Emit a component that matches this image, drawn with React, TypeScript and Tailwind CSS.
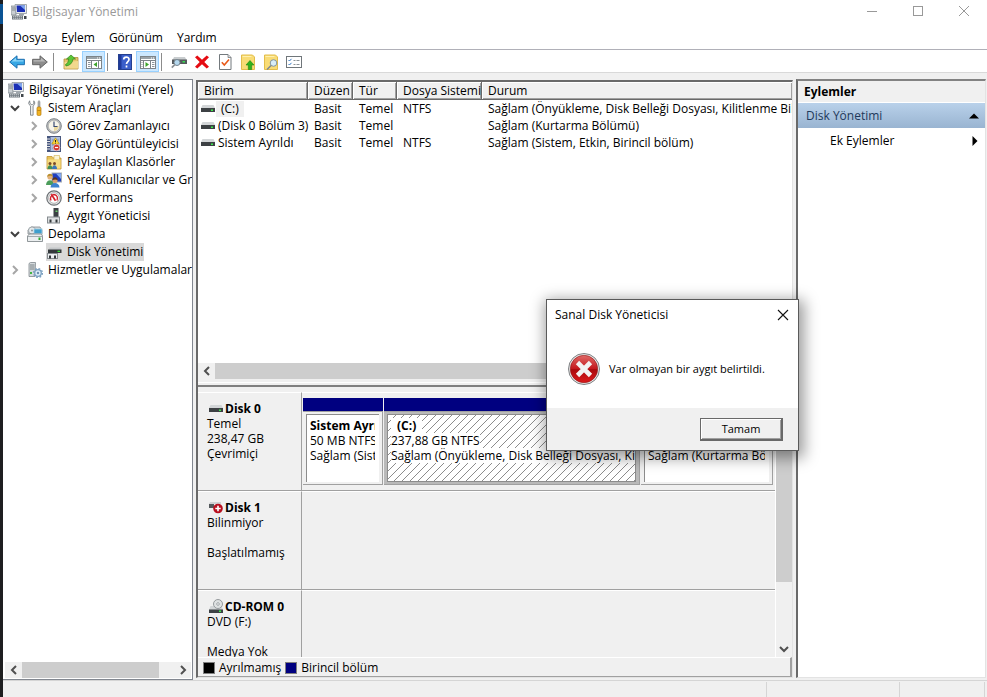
import React from 'react';

type Children = { children?: React.ReactNode };

function Svg({ children, w = 16, h = 16 }: Children & { w?: number; h?: number }) {
  return (
    <svg width={w} height={h} viewBox={`0 0 ${w} ${h}`} className="block shrink-0" aria-hidden="true">
      {children}
    </svg>
  );
}

const ComputerIcon = () => (
  <Svg>
    <rect x="0" y="2" width="5" height="9" fill="#c9ced2" stroke="#7d858b" strokeWidth=".7" />
    <path d="M1 4h3M1 6h3" stroke="#6e767c" strokeWidth=".8" />
    <path d="M4 .5h11.5v9H5z" fill="#e9ebec" stroke="#8f979d" strokeWidth=".8" />
    <path d="M5.5 1.5H14V8H6z" fill="#1a2fb5" />
    <path d="M9 1.5H14V6z" fill="#7fa6ee" />
    <rect x="8" y="10" width="5" height="1.5" fill="#9fa7ad" />
    <rect x="1" y="11.5" width="11" height="4" fill="#6f777d" />
    <path d="M2 12.7h9M2 14.3h9" stroke="#d8dcdf" strokeWidth=".8" strokeDasharray="1.4 .6" />
    <rect x="13" y="12" width="2.5" height="3" fill="#3f454a" />
  </Svg>
);
const ToolsIcon = () => (
  <Svg>
    <path d="M2.6.8 1.6 3.2l1.3 2.3.6.5v9.2h2.6V6l.8-.8 1-2.2L6.8.8v2.6l-1.2 1.1H4.2L3 3.4z" fill="#eceeef" stroke="#70777c" strokeWidth=".8" />
    <path d="M11 1.5 12 .6l1 .9v5.8h-2z" fill="#aeb4b8" stroke="#777" strokeWidth=".5" />
    <rect x="10" y="7" width="4" height="8.5" rx="1.2" fill="#f1b323" stroke="#b47a0c" strokeWidth=".7" />
    <path d="M10.3 10.5h3.4" stroke="#b47a0c" strokeWidth=".8" />
  </Svg>
);
const ClockIcon = () => (
  <Svg>
    <circle cx="8" cy="8" r="7.3" fill="#bcc0c3" stroke="#7c8185" strokeWidth="1" />
    <circle cx="8" cy="8" r="5.7" fill="#f7f5ea" stroke="#999" strokeWidth=".5" />
    <path d="M8 8h4.8A5 5 0 0 1 8 13z" fill="#ead9a0" />
    <path d="M8 3.6V8.5H11.5" fill="none" stroke="#3a4c74" strokeWidth="1.2" />
  </Svg>
);
const EventIcon = () => (
  <Svg>
    <rect x="1.5" y=".5" width="13" height="15" fill="#aebfe0" stroke="#48577e" />
    <rect x="2" y="1" width="2.5" height="14" fill="#42537d" />
    <path d="M1 3h3M1 5.5h3M1 8h3M1 10.5h3M1 13h3" stroke="#e6e6e6" />
    <path d="M6 4h7M6 6.5h7M6 9h7M6 12h7" stroke="#6b7ea9" strokeWidth=".7" />
    <path d="M9.5 1.8 13.3 8H5.8z" fill="#ffd83b" stroke="#b28b00" strokeWidth=".6" />
    <path d="M9.5 4v2.2M9.5 6.8v.7" stroke="#222" />
    <circle cx="10.5" cy="11.5" r="3.3" fill="#d3352d" stroke="#fff" strokeWidth=".5" />
    <path d="M8.9 11.5h3.2" stroke="#fff" strokeWidth="1.2" />
  </Svg>
);
const SharedIcon = () => (
  <Svg>
    <path d="M1 2.5h5l1.5 1.5H15v11H1z" fill="#e9c35a" stroke="#c0922d" strokeWidth=".8" />
    <path d="M8 1.5h5.5V6H8z" fill="#fbf4d5" stroke="#d4b04c" strokeWidth=".6" />
    <path d="M1.5 5.5h13v9h-13z" fill="#f7dd83" />
    <circle cx="4" cy="9.5" r="1.5" fill="#7a4a28" />
    <path d="M1.5 15c0-5 5-5 5 0z" fill="#3f8f57" />
    <circle cx="8.5" cy="9.5" r="1.5" fill="#7a4a28" />
    <path d="M6 15c0-5 5-5 5 0z" fill="#3b76b8" />
  </Svg>
);
const UsersIcon = () => (
  <Svg>
    <rect x="6" y="1" width="9.5" height="9" fill="#1f3fc0" stroke="#a6adb5" />
    <path d="M10 1.5h5V7z" fill="#82a8ef" />
    <circle cx="4" cy="5" r="2.6" fill="#e2b178" />
    <path d="M1.2 5C1 .8 7 .8 6.8 4.8 5 3.5 3 3.5 1.2 5z" fill="#b88d2c" />
    <path d="M0 13c0-6.5 8-6.5 8 0z" fill="#4c9d5b" />
    <circle cx="9" cy="8.5" r="2.5" fill="#d99c68" />
    <path d="M6.3 8.3c0-4 5.6-4 5.4 0-1.5-1.2-3.6-1.2-5.4 0z" fill="#5b341a" />
    <path d="M4.5 15.5c0-6 9-6 9 0z" fill="#3c82cf" />
  </Svg>
);
const PerfIcon = () => (
  <Svg>
    <circle cx="8" cy="8" r="7.2" fill="#e7e8e9" stroke="#6c7175" strokeWidth="1.2" />
    <circle cx="8" cy="8" r="5.3" fill="#fff" stroke="#888" strokeWidth=".6" />
    <path d="M5 10.5C3.800 8 4.800 5 8 4.500c3 .2 4.200 3.200 3 6" fill="none" stroke="#d3202b" strokeWidth="1.4" />
    <path d="m5.3 4.2 4.200 6.500" stroke="#d3202b" strokeWidth="1.7" />
  </Svg>
);
const DeviceIcon = () => (
  <Svg>
    <rect x="7.5" y="0" width="5" height="9" fill="#3b4044" />
    <rect x="9.5" y="2.5" width="2" height="1.5" fill="#6bd06b" />
    <rect x="1.5" y="9" width="12" height="6" fill="#dcdfe1" stroke="#858b8f" />
    <rect x="3.5" y="11.5" width="2" height="3" fill="#33383b" />
    <rect x="9.5" y="11.5" width="2" height="3" fill="#33383b" />
  </Svg>
);
const StorageIcon = () => (
  <Svg>
    <path d="M1 4 4 1h9l2 3v4H1z" fill="#d4d8da" stroke="#858c90" strokeWidth=".8" />
    <circle cx="5" cy="4.5" r="3.6" fill="#e6eaec" stroke="#8e979c" strokeWidth=".8" />
    <circle cx="5" cy="4.5" r="1" fill="#8e979c" />
    <rect x="7" y="3" width="8" height="4.5" fill="#3f9fcd" stroke="#a7d2e6" strokeWidth=".8" />
    <path d="M.5 10 2.5 8h12L15.500 10v5.5H.5z" fill="#eceff0" stroke="#767e82" strokeWidth=".8" />
    <path d="M1 10.5h14.500" stroke="#a4abb0" />
    <rect x="11.5" y="11.5" width="2" height="2.5" fill="#2fa72f" />
  </Svg>
);
const DiskMgmtIcon = () => (
  <Svg>
    <path d="M3.5 3.5h11l1 2.5h-13z" fill="#c4c7c9" />
    <rect x="2" y="5.5" width="13.5" height="3.5" fill="#33383b" />
    <rect x="11.5" y="6.7" width="2.5" height="1.3" fill="#38e038" />
    <rect x="1.5" y="9.5" width="10" height="5" fill="#eceff1" stroke="#858b8f" />
    <rect x="3" y="11.5" width="2" height="3" fill="#33383b" />
    <rect x="8" y="11.5" width="2" height="3" fill="#33383b" />
  </Svg>
);
const ServicesIcon = () => (
  <Svg>
    <path d="M2 1.5 3.5.5h5l-.5 14H2z" fill="#d5dadd" stroke="#80888d" strokeWidth=".8" />
    <path d="M3 3h4.5M3 5h4.5M3 7h4.5" stroke="#70787d" strokeWidth=".9" />
    <rect x="3" y="10" width="2" height="2" fill="#41b541" />
    <circle cx="11" cy="11" r="3.3" fill="#dcecf8" stroke="#7ba0c0" strokeWidth="1.3" />
    <circle cx="11" cy="11" r="4.4" fill="none" stroke="#7ba0c0" strokeWidth="1.4" strokeDasharray="1.7 1.75" />
    <circle cx="11" cy="11" r="1.2" fill="#6c8fae" />
  </Svg>
);

const BackIcon = () => (
  <Svg>
    <path d="M.7 8 8 1.8v3.5h7.4v5.4H8v3.5z" fill="#37a7e4" stroke="#1d6fb1" strokeWidth="1" strokeLinejoin="round" />
    <path d="M2.6 7.6 7 3.8v2.5h7.4v1.3z" fill="#8fd6f7" />
  </Svg>
);
const ForwardIcon = () => (
  <Svg>
    <path d="M15.3 8 8 1.8v3.5H.6v5.4H8v3.5z" fill="#8d8d8d" stroke="#666" strokeWidth="1" strokeLinejoin="round" />
    <path d="M13.4 7.6 9 3.8v2.5H1.6v1.3z" fill="#b9b9b9" />
  </Svg>
);
const FolderUpIcon = () => (
  <Svg>
    <path d="M1 5h8l1-1.500h5V15H1z" fill="#e6c26b" stroke="#b28f3c" strokeWidth=".8" />
    <path d="M1.5 8 15 7v7.6H1.5z" fill="#f2d88d" />
    <path d="M2.500 10.500C4 10 5.500 8 5.600 5H3.500L8 1l4.500 4H10c-.5 4-3 6.500-7 7z" fill="#5bc637" stroke="#35851c" strokeWidth=".7" />
  </Svg>
);
const PaneIcon = ({ right = false }: { right?: boolean }) => (
  <Svg>
    <rect x=".5" y="2.5" width="15" height="12" fill="#fff" stroke="#7d8489" />
    <rect x="1" y="3" width="14" height="2" fill="#9aa3a9" />
    <path d="M11 4h1M13 4h1" stroke="#fff" />
    <path d="M1 6.5h14" stroke="#7d8489" />
    <path d={right ? 'M10.5 7v7M3.5 7v7' : 'M5.500 7v7M12.500 7v7'} stroke="#7d8489" />
    <path d={right ? 'M1.500 8.500h1M1.500 10.500h1M1.500 12.500h1M12 8.500h2.500M12 10.500h2.500M12 12.500h2.500' : 'M2 8.500h2.500M2 10.500h2.500M2 12.500h2.500'} stroke="#8d959b" />
    <path d={right ? 'M5.500 8v5L9 10.500z' : 'M11 8v5L7.500 10.500z'} fill="#3da52b" />
  </Svg>
);
const HelpIcon = () => (
  <Svg>
    <rect x="1.5" y=".5" width="13" height="15" fill="#3a5fca" stroke="#25408f" />
    <rect x="2" y="1" width="2.5" height="14" fill="#1f3a9a" />
    <path d="M6.7 5.6C6.7 2.3 12 2.3 12 5.5c0 2-2.5 2.2-2.5 4.5M9.5 11.4v2" fill="none" stroke="#fff" strokeWidth="1.7" />
  </Svg>
);
const DriveSearchIcon = () => (
  <Svg>
    <path d="M3 3h11l1.5 3H1.500z" fill="#c9cdcf" />
    <rect x="1" y="5.500" width="15" height="4.500" fill="#55595c" />
    <rect x="11.500" y="7" width="2.5" height="1.5" fill="#35dd50" />
    <circle cx="6" cy="8.5" r="3" fill="#b5d8ee" stroke="#77858f" />
    <path d="m3.8 10.7-3 3" stroke="#8a8f94" strokeWidth="1.7" />
  </Svg>
);
const DeleteIcon = () => (
  <Svg>
    <path d="M1 3.2 3.3 1.5 8 5.7l4.7-4.2L15 3.2 10.3 8l4.7 4.8-2.3 1.7L8 10.3l-4.7 4.2L1 12.8 5.7 8z" fill="#e50b12" />
  </Svg>
);
const CheckPageIcon = () => (
  <Svg>
    <path d="M2.5.5h8.5l3 3v12H2.5z" fill="#fff" stroke="#73797d" />
    <path d="M11 .5v3h3" fill="#ddd" stroke="#73797d" strokeWidth=".8" />
    <path d="m4.8 8.3 2.5 2.7L12 5.5" fill="none" stroke="#e85a1a" strokeWidth="1.6" />
  </Svg>
);
const YellowPageIcon = ({ search = false }: { search?: boolean }) => (
  <Svg>
    <path d="M1.5 1h11l2 2v12.5h-13z" fill="#f9dc75" stroke="#e2bd4b" />
    <path d="M2.5 2.5h9" stroke="#fff0ae" />
    {search ? (
      <>
        <circle cx="10.5" cy="9" r="3.3" fill="#d8edf8" stroke="#82949f" />
        <path d="m8 11.5-4 4" stroke="#7d8790" strokeWidth="1.5" />
      </>
    ) : (
      <path d="M10 6.5 14 11h-2.3v4.5H8.3V11H6z" fill="#32b21c" stroke="#1f8611" strokeWidth=".6" />
    )}
  </Svg>
);
const ListIcon = () => (
  <Svg>
    <rect x=".5" y="2.5" width="15" height="11" fill="#fff" stroke="#70767a" />
    <path d="m2.5 6 1 1 2-2.2M2.5 10l1 1 2-2.2" fill="none" stroke="#3579c4" />
    <path d="M7.5 6.5h2M10.5 6.5h3M7.5 10.5h2M10.5 10.5h3" stroke="#8c9499" />
  </Svg>
);
const DriveIcon = () => (
  <Svg w={14} h={9}>
    <path d="M1.5 1h11L14 4H0z" fill="#d3d6d8" />
    <rect x="0" y="4" width="14" height="4" fill="#3d4144" />
    <rect x="10" y="5.5" width="2" height="1.5" fill="#3dea4b" />
  </Svg>
);
const UnknownDiskIcon = () => (
  <Svg w={14} h={13}>
    <path d="M1 1h11v2H0z" fill="#cfd2d4" />
    <rect x="0" y="3" width="5" height="4" fill="#54595c" />
    <circle cx="9" cy="7.5" r="4.8" fill="#b8101f" />
    <path d="M9 4.8v5.4M6.3 7.5h5.4" stroke="#fff" strokeWidth="1.6" />
  </Svg>
);
const CdIcon = () => (
  <Svg w={14} h={15}>
    <path d="M1.5 7h11L14 11H0z" fill="#d3d6d8" />
    <circle cx="9" cy="5" r="4.5" fill="#dfe2e3" stroke="#8c9295" strokeWidth=".9" />
    <circle cx="9" cy="5" r="1.3" fill="#fff" stroke="#8c9295" strokeWidth=".8" />
    <rect x="0" y="10.5" width="14" height="3.5" fill="#3d4144" />
    <rect x="10" y="11.5" width="2" height="1.5" fill="#3dea4b" />
  </Svg>
);
const ErrorIcon = () => (
  <Svg w={32} h={32}>
    <defs>
      <linearGradient id="errorFill" x1="0" y1="0" x2="0" y2="1">
        <stop offset="0" stopColor="#e06a68" />
        <stop offset=".5" stopColor="#c3161b" />
        <stop offset=".52" stopColor="#a90a0e" />
        <stop offset="1" stopColor="#dd1a1c" />
      </linearGradient>
    </defs>
    <circle cx="16" cy="16" r="15.5" fill="#e8e8e8" stroke="#7e8083" strokeWidth="1" />
    <circle cx="16" cy="16" r="13.7" fill="url(#errorFill)" stroke="#8d1717" strokeWidth=".6" />
    <path d="m9.5 9.5 13 13M22.5 9.5l-13 13" stroke="#f2f2f2" strokeWidth="4.6" />
  </Svg>
);

type Dir = 'left' | 'right' | 'down';
const chevrons: Record<Dir, string> = {
  left: 'M7 1 3 5l4 4',
  right: 'M3 1l4 4-4 4',
  down: 'M1 3l4 4 4-4',
};
function Chevron({ dir, color = '#505050', thick = 2 }: { dir: Dir; color?: string; thick?: number }) {
  return (
    <Svg w={10} h={10}>
      <path d={chevrons[dir]} fill="none" stroke={color} strokeWidth={thick} />
    </Svg>
  );
}

const ToolSeparator = () => <span className="ml-0.5 mr-[5px] h-[18px] w-px bg-[#8c8c8c]" />;

function Tool({ label, on = false, children }: Children & { label: string; on?: boolean }) {
  return (
    <button
      type="button"
      aria-label={label}
      aria-pressed={on}
      className={`flex h-[21px] w-[23px] items-center justify-center border ${
        on ? 'border-[#99d1ff] bg-[#cce8ff]' : 'border-transparent'
      }`}
    >
      {children}
    </button>
  );
}

type Node = { label: string; icon: () => React.ReactElement; level: 0 | 1 | 2; state?: 'open' | 'closed'; selected?: boolean };
const nodes: Node[] = [
  { label: 'Bilgisayar Yönetimi (Yerel)', icon: ComputerIcon, level: 0 },
  { label: 'Sistem Araçları', icon: ToolsIcon, level: 1, state: 'open' },
  { label: 'Görev Zamanlayıcı', icon: ClockIcon, level: 2, state: 'closed' },
  { label: 'Olay Görüntüleyicisi', icon: EventIcon, level: 2, state: 'closed' },
  { label: 'Paylaşılan Klasörler', icon: SharedIcon, level: 2, state: 'closed' },
  { label: 'Yerel Kullanıcılar ve Gruplar', icon: UsersIcon, level: 2, state: 'closed' },
  { label: 'Performans', icon: PerfIcon, level: 2, state: 'closed' },
  { label: 'Aygıt Yöneticisi', icon: DeviceIcon, level: 2 },
  { label: 'Depolama', icon: StorageIcon, level: 1, state: 'open' },
  { label: 'Disk Yönetimi', icon: DiskMgmtIcon, level: 2, selected: true },
  { label: 'Hizmetler ve Uygulamalar', icon: ServicesIcon, level: 1, state: 'closed' },
];
const indents = ['pl-[5px]', 'pl-[7px]', 'pl-[26px]'];

function Tree() {
  return (
    <aside className="flex w-[190px] shrink-0 flex-col border-b border-r border-t border-[#828790] bg-white">
      <ul className="flex-1 overflow-hidden pt-px">
        {nodes.map(({ icon: Icon, ...n }) => (
          <li key={n.label} className={`flex h-[18px] items-center overflow-hidden ${indents[n.level]}`}>
            {n.level > 0 && (
              <span className="w-[17px] shrink-0">
                {n.state && (
                  <Chevron dir={n.state === 'open' ? 'down' : 'right'} color={n.state === 'open' ? '#404040' : '#a6a6a6'} />
                )}
              </span>
            )}
            <button
              type="button"
              className={`flex h-[18px] shrink-0 items-center gap-[5px] whitespace-nowrap pr-px ${n.selected ? 'bg-[#d9d9d9]' : ''}`}
            >
              <Icon />
              {n.label}
            </button>
          </li>
        ))}
      </ul>
      <div className="mb-px ml-0.5 mr-px flex h-4 items-center bg-[#f0f0f0]">
        <span className="flex w-[17px] justify-center"><Chevron dir="left" /></span>
        <span className="h-full flex-[137] bg-[#cdcdcd]" />
        <span className="flex-[15]" />
        <span className="flex w-[17px] justify-center"><Chevron dir="right" /></span>
      </div>
    </aside>
  );
}

const volumes = [
  { name: '(C:)', fs: 'NTFS', status: 'Sağlam (Önyükleme, Disk Belleği Dosyası, Kilitlenme Bilgisi)', selected: true },
  { name: '(Disk 0 Bölüm 3)', fs: '', status: 'Sağlam (Kurtarma Bölümü)' },
  { name: 'Sistem Ayrıldı', fs: 'NTFS', status: 'Sağlam (Sistem, Etkin, Birincil bölüm)' },
];

function VolumeList() {
  return (
    <div className="flex h-[297px] shrink-0 flex-col bg-white">
      <div className="flex-1 overflow-hidden">
        <table className="w-full table-fixed border-separate border-spacing-0 whitespace-nowrap text-left">
          <colgroup>
            <col className="w-[110px]" />
            <col className="w-[45px]" />
            <col className="w-[44px]" />
            <col className="w-[85px]" />
            <col />
          </colgroup>
          <thead>
            <tr className="h-[18px] bg-[#f0f0f0]">
              {['Birim', 'Düzen', 'Tür', 'Dosya Sistemi', 'Durum'].map((h) => (
                <th
                  key={h}
                  className="border-b border-r border-[#696969] p-0 pl-1.5 font-normal shadow-[inset_1px_1px_0_#fff,inset_-1px_-1px_0_#a0a0a0] last:border-r-0"
                >
                  {h}
                </th>
              ))}
            </tr>
          </thead>
          <tbody>
            {volumes.map((v) => (
              <tr key={v.name} className="h-[17px]">
                <td className="p-0">
                  <span className="flex items-center pl-[3px]">
                    <DriveIcon />
                    <span className={v.selected ? 'ml-px bg-[#f0f0f0] px-[5px]' : 'pl-[3px]'}>{v.name}</span>
                  </span>
                </td>
                <td className="p-0 pl-1.5">Basit</td>
                <td className="p-0 pl-1.5">Temel</td>
                <td className="p-0 pl-1.5">{v.fs}</td>
                <td className="overflow-hidden p-0 pl-1.5">{v.status}</td>
              </tr>
            ))}
          </tbody>
        </table>
      </div>
      <div className="flex h-4 shrink-0 items-center bg-[#f0f0f0]">
        <span className="flex w-[17px] justify-center"><Chevron dir="left" /></span>
        <span className="h-full flex-1 bg-[#cdcdcd]" />
        <span className="w-24" />
        <span className="flex w-[17px] justify-center"><Chevron dir="right" /></span>
      </div>
    </div>
  );
}

function Hatch() {
  return (
    <svg className="absolute inset-0 h-full w-full" aria-hidden="true">
      <defs>
        <pattern id="hatch" width="8" height="8" patternUnits="userSpaceOnUse">
          <path d="M-1 9 9-1M-1 1 1-1M7 9 9 7" stroke="#8c8c8c" strokeWidth="1" />
        </pattern>
      </defs>
      <rect width="100%" height="100%" fill="url(#hatch)" />
    </svg>
  );
}

function Partition({ name, size, status, width, active = false }: { name: string; size: string; status: string; width: string; active?: boolean }) {
  return (
    <div className={`flex flex-col ${width}`}>
      <div className="h-[13px] bg-[#000080]" />
      <div className={`flex flex-1 border-b border-r border-t border-[#a0a0a0] px-[3px] py-0.5 ${active ? 'bg-[#b9b9b9]' : 'bg-[#f0f0f0]'}`}>
        <div className={`relative min-w-0 flex-1 overflow-hidden whitespace-nowrap border-l border-t border-[#8c8c8c] bg-white pl-[3px] pt-[3px] leading-[15px] ${active ? 'border-b border-r' : 'pr-1'}`}>
          {active && <Hatch />}
          <div className="relative h-[15px] overflow-hidden font-bold">
            <span className={active ? 'bg-white px-1.5' : ''}>{name}</span>
          </div>
          <div className="relative h-[15px] overflow-hidden"><span className="bg-white">{size}</span></div>
          <div className="relative h-[15px] overflow-hidden"><span className="bg-white">{status}</span></div>
        </div>
      </div>
    </div>
  );
}

function DiskRow({ icon, name, lines, children }: Children & { icon: React.ReactNode; name: string; lines: string[] }) {
  return (
    <section className="flex h-[99px] shrink-0 whitespace-nowrap">
      <div className="flex w-[104px] shrink-0 flex-col border-b border-r border-[#a0a0a0] border-t border-t-white pl-[9px] pt-2 leading-[15px]">
        <h2 className="flex h-[15px] items-center font-bold">
          <span className="mx-0.5 flex h-[15px] items-center">{icon}</span>
          {name}
        </h2>
        {lines.map((l, i) => (
          <p key={i} className="h-[15px]">{l}</p>
        ))}
      </div>
      <div className="flex min-w-0 flex-1 gap-px border-b border-t border-b-[#a0a0a0] border-t-white pb-[5px] pl-px pr-0.5 pt-[5px]">
        {children}
      </div>
    </section>
  );
}

function DiskMap() {
  return (
    <div className="flex min-h-0 flex-1">
      <div className="flex min-w-0 flex-1 flex-col overflow-hidden">
        <DiskRow icon={<DriveIcon />} name="Disk 0" lines={['Temel', '238,47 GB', 'Çevrimiçi']}>
          <Partition name="Sistem Ayrıldı" size="50 MB NTFS" status="Sağlam (Sistem, Etkin)" width="w-[80px] shrink-0" />
          <Partition name="(C:)" size="237,88 GB NTFS" status="Sağlam (Önyükleme, Disk Belleği Dosyası, Kilitlenme)" width="min-w-0 flex-1" active />
          <Partition name="" size="549 MB" status="Sağlam (Kurtarma Bölümü)" width="w-[132px] shrink-0" />
        </DiskRow>
        <DiskRow icon={<UnknownDiskIcon />} name="Disk 1" lines={['Bilinmiyor', '', 'Başlatılmamış']} />
        <DiskRow icon={<CdIcon />} name="CD-ROM 0" lines={['DVD (F:)', '', 'Medya Yok']} />
      </div>
      <div className="flex w-[17px] shrink-0 flex-col items-center border-l border-white bg-[#f0f0f0]">
        <span className="mt-4 h-[174px] w-full bg-[#cdcdcd]" />
        <span className="mb-[3px] mt-auto"><Chevron dir="down" /></span>
      </div>
    </div>
  );
}

function Legend() {
  return (
    <footer className="flex h-5 shrink-0 items-center border-b border-r-2 border-t border-[#a0a0a0] border-t-white pl-[5px] pt-px">
      <span className="mr-1 size-3 border border-[#808080] bg-black" />
      Ayrılmamış
      <span className="mx-1 size-3 border border-[#808080] bg-[#000080]" />
      Birincil bölüm
    </footer>
  );
}

function Actions() {
  return (
    <aside className="mb-0.5 mr-px flex w-[190px] shrink-0 flex-col border border-l-2 border-t-2 border-[#e3e3e3] border-l-[#696969] border-t-[#828282] bg-white">
      <h2 className="flex h-[22px] items-center border-b border-white bg-[#f0f0f0] pl-1.5 font-bold">Eylemler</h2>
      <button type="button" className="flex h-[25px] items-center justify-between bg-linear-to-b from-[#b9d1ea] to-[#99b4d1] pl-2 pr-1.5 text-[#1e395b]">
        Disk Yönetimi
        <Svg w={10} h={6}><path d="M0 5.5 5 .5l5 5z" fill="#000" /></Svg>
      </button>
      <button type="button" className="flex h-[25px] items-center justify-between pl-8 pr-[7px]">
        Ek Eylemler
        <Svg w={6} h={10}><path d="M.5 0v10l5-5z" fill="#000" /></Svg>
      </button>
    </aside>
  );
}

function ErrorDialog() {
  return (
    <div
      role="dialog"
      aria-label="Sanal Disk Yöneticisi"
      className="absolute left-[546px] top-[299px] flex w-[253px] flex-col border border-[#5a5a5a] bg-white shadow-[2px_4px_14px_3px_rgba(0,0,0,0.4)]"
    >
      <header className="flex h-[30px] items-center justify-between pl-2 pr-[9px]">
        Sanal Disk Yöneticisi
        <button type="button" aria-label="Kapat">
          <Svg w={12} h={12}><path d="m1 1 10 10M11 1 1 11" stroke="#111" strokeWidth="1.1" /></Svg>
        </button>
      </header>
      <div className="flex h-[78px] items-center gap-[9px] pl-[21px] text-[11px]">
        <ErrorIcon />
        <p>Var olmayan bir aygıt belirtildi.</p>
      </div>
      <footer className="flex h-[42px] items-center justify-end bg-[#f0f0f0] pr-[15px]">
        <button
          type="button"
          className="h-[23px] w-[83px] border border-b-2 border-r-2 border-[#696969] bg-[#f0f0f0] text-[11px] shadow-[inset_1px_1px_0_#fff,inset_-1px_-1px_0_#a0a0a0]"
        >
          Tamam
        </button>
      </footer>
    </div>
  );
}

export default function App() {
  return (
    <div className="relative flex h-screen overflow-hidden bg-[#f0f0f0] font-['Open_Sans','Noto_Sans',sans-serif] text-[12px] leading-4 text-black">
      <div className="flex w-[3px] shrink-0 flex-col bg-[#1e1e20]">
        <span className="mt-1 h-5 bg-[#0b5394]" />
      </div>
      <div className="flex min-w-0 flex-1 flex-col">
        <header className="flex h-6 shrink-0 items-center bg-white pl-2 text-[#999]">
          <ComputerIcon />
          <h1 className="pl-[5px]">Bilgisayar Yönetimi</h1>
          <div className="ml-auto flex">
            <button type="button" aria-label="Simge durumuna küçült" className="flex w-[46px] justify-center">
              <Svg w={12} h={12}><path d="M1 5.5h10" stroke="#999" /></Svg>
            </button>
            <button type="button" aria-label="Ekranı kapla" className="flex w-[46px] justify-center">
              <Svg w={12} h={12}><rect x="1.5" y=".5" width="9" height="9" fill="none" stroke="#999" /></Svg>
            </button>
            <button type="button" aria-label="Kapat" className="flex w-[46px] justify-center">
              <Svg w={12} h={12}><path d="m1 0 10 10M11 0 1 10" stroke="#999" /></Svg>
            </button>
          </div>
        </header>
        <nav className="flex h-[26px] shrink-0 items-center gap-[14px] border-b border-[#b0b0b8] bg-white pl-2.5 pt-0.5">
          {['Dosya', 'Eylem', 'Görünüm', 'Yardım'].map((m) => (
            <button key={m} type="button">{m}</button>
          ))}
        </nav>
        <div className="flex h-[23px] shrink-0 items-center border-b border-[#d9d9d9] bg-white pl-0.5 pt-px">
          <Tool label="Geri"><BackIcon /></Tool>
          <Tool label="İleri"><ForwardIcon /></Tool>
          <ToolSeparator />
          <Tool label="Bir düzey yukarı"><FolderUpIcon /></Tool>
          <Tool label="Konsol ağacını göster" on><PaneIcon /></Tool>
          <ToolSeparator />
          <Tool label="Yardım"><HelpIcon /></Tool>
          <Tool label="Eylem bölmesini göster" on><PaneIcon right /></Tool>
          <ToolSeparator />
          <Tool label="Diskleri yeniden tara"><DriveSearchIcon /></Tool>
          <Tool label="Sil"><DeleteIcon /></Tool>
          <Tool label="Özellikler"><CheckPageIcon /></Tool>
          <Tool label="Yukarı"><YellowPageIcon /></Tool>
          <Tool label="Bul"><YellowPageIcon search /></Tool>
          <Tool label="Ayarlar"><ListIcon /></Tool>
        </div>
        <div className="flex min-h-0 flex-1 gap-[3px] pt-[6px]">
          <Tree />
          <main className="mb-0.5 mt-px flex min-w-0 flex-1 flex-col border border-l-2 border-t-2 border-[#e3e3e3] border-l-[#696969] border-t-[#696969]">
            <VolumeList />
            <div className="flex h-[13px] shrink-0 flex-col">
              <span className="mt-[3px] h-px shrink-0 bg-white" />
              <span className="mt-0.5 h-0.5 shrink-0 bg-[#808080]" />
            </div>
            <DiskMap />
            <Legend />
          </main>
          <Actions />
        </div>
        <footer className="flex h-[17px] shrink-0 justify-end border-t border-[#d5d5d5] pr-0.5 pt-px">
          <span className="w-[133px] border-l border-[#d5d5d5]" />
          <span className="w-[86px] border-l border-r border-[#d5d5d5]" />
        </footer>
      </div>
      <ErrorDialog />
    </div>
  );
}
